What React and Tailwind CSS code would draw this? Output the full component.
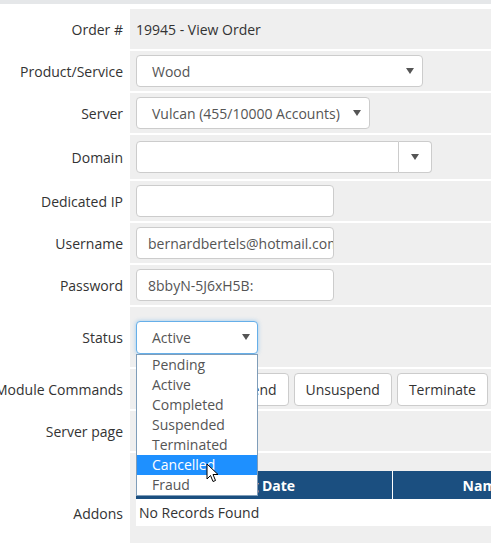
import React from "react";

const Caret = () => (
  <svg width="8" height="6" viewBox="0 0 8 6" className="shrink-0">
    <path d="M0 0 L8 0 L4 6 Z" fill="#555" />
  </svg>
);

const Row = ({ label, children, className = "h-[40px]", cell = "items-center" }) => (
  <div className="flex mb-[2px]">
    <div className={`w-[130px] shrink-0 flex items-center justify-end pr-[7px] bg-white ${className}`}>
      <span className="whitespace-nowrap">{label}</span>
    </div>
    <div className={`flex-1 min-w-0 bg-[#efefef] flex px-[6px] ${cell} ${className}`}>{children}</div>
  </div>
);

const SelectBox = ({ value, width }) => (
  <div className={`${width} h-[32px] bg-white border border-[#ccc] rounded-[4px] flex items-center justify-between pl-[15px] pr-[8px] text-[#555]`}>
    <span className="whitespace-nowrap">{value}</span>
    <Caret />
  </div>
);

const TextBox = ({ value = "" }) => (
  <div className="w-[198px] h-[32px] bg-white border border-[#ccc] rounded-[4px] flex items-center pl-[11px] pr-[2px] text-[#555] overflow-hidden">
    <span className="whitespace-nowrap">{value}</span>
  </div>
);

const Btn = ({ children }) => (
  <div className="h-[33px] px-[11px] bg-white border border-[#ccc] rounded-[4px] flex items-center text-[#333] whitespace-nowrap shrink-0">
    {children}
  </div>
);

const statuses = ["Pending", "Active", "Completed", "Suspended", "Terminated", "Cancelled", "Fraud"];

export default function App() {
  return (
    <div
      className="w-[491px] h-[543px] overflow-hidden bg-white text-[14px] text-[#333] relative"
      style={{ fontFamily: '"Open Sans", "Liberation Sans", sans-serif' }}
    >
      <div className="h-[4px] bg-[#e5e7e9]" />
      <div className="h-[5px] bg-white" />

      <Row label="Order #">
        <span>19945 - View Order</span>
      </Row>

      <Row label="Product/Service">
        <SelectBox value="Wood" width="w-[287px]" />
      </Row>

      <Row label="Server">
        <SelectBox value="Vulcan (455/10000 Accounts)" width="w-[234px]" />
      </Row>

      <Row label="Domain" className="h-[44px]">
        <div className="flex w-[296px] h-[32px]">
          <div className="flex-1 bg-white border border-[#ccc] rounded-l-[4px]" />
          <div className="w-[33px] bg-white border border-l-0 border-[#ccc] rounded-r-[4px] flex items-center justify-center">
            <Caret />
          </div>
        </div>
      </Row>

      <Row label="Dedicated IP">
        <TextBox />
      </Row>

      <Row label="Username">
        <TextBox value="bernardbertels@hotmail.com" />
      </Row>

      <Row label="Password">
        <TextBox value="8bbyN-5J6xH5B:" />
      </Row>

      <Row label="Status" className="h-[60px]">
        <div className="relative z-10">
          <div className="w-[122px] h-[33px] bg-white border border-[#66afe9] rounded-[4px] shadow-[0_0_4px_rgba(102,175,233,0.6)] flex items-center justify-between pl-[15px] pr-[7px] text-[#555]">
            <span>Active</span>
            <Caret />
          </div>
          <div className="absolute left-0 top-[33px] w-[122px] bg-white border border-[#7f9db9] text-[#555]">
            {statuses.map((s) => (
              <div
                key={s}
                className={`h-[20px] leading-[20px] pl-[15px] ${s === "Cancelled" ? "bg-[#1e90ff] text-white" : ""}`}
              >
                {s}
              </div>
            ))}
            <svg
              width="14"
              height="20"
              viewBox="0 0 14 20"
              className="absolute left-[69px] top-[108px]"
            >
              <path
                d="M1 1 L1 16 L4.5 12.5 L7 18.5 L9.5 17.5 L7 11.5 L12 11.5 Z"
                fill="#fff"
                stroke="#000"
                strokeWidth="1"
                strokeLinejoin="round"
              />
            </svg>
          </div>
        </div>
      </Row>

      <Row label="Module Commands">
        <div className="flex gap-[5px]">
          <Btn>Create</Btn>
          <Btn>Suspend</Btn>
          <Btn>Unsuspend</Btn>
          <Btn>Terminate</Btn>
          <Btn>Change Package</Btn>
        </div>
      </Row>

      <Row label="Server page">
        <span />
      </Row>

      <Row label="Addons" className="h-[120px]" cell="items-start pt-[18px]">
        <div className="w-[560px] shrink-0">
          <div className="flex h-[28px] bg-[#1b4f80] text-white font-bold">
            <div className="w-[256px] flex items-center justify-center">Reg Date</div>
            <div className="w-[182px] border-l border-white flex items-center justify-center">Name</div>
            <div className="flex-1 border-l border-white flex items-center justify-center">Pricing</div>
          </div>
          <div className="h-[27px] bg-white flex items-center pl-[3px]">No Records Found</div>
        </div>
      </Row>
    </div>
  );
}
